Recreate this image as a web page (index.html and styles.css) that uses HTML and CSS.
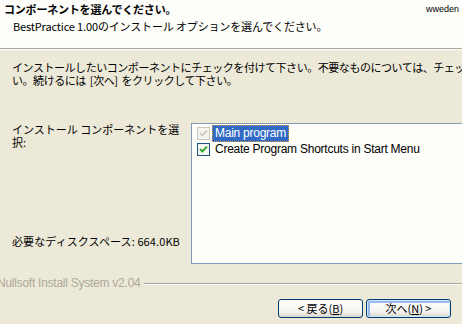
FILE: index.html
```html
<!DOCTYPE html>
<html lang="ja">
<head>
    <meta charset="UTF-8">
    <meta name="viewport" content="width=device-width, initial-scale=1.0">
    <title>BestPractice 1.00 セットアップ</title>
    <link rel="stylesheet" href="styles.css">
</head>
<body>

    <!-- Header -->
    <div class="header">
        <div class="header-top">
            <span class="title">コンポーネントを選んでください。</span>
            <span class="user">wweden</span>
        </div>
        <div class="subtitle">BestPractice 1.00のインストール オプションを選んでください。</div>
    </div>

    <!-- Page body -->
    <div class="page">
        <div class="intro">
            <div class="intro-line">インストールしたいコンポーネントにチェックを付けて下さい。不要なものについては、チェックを外して下さ</div>
            <div class="intro-line">い。続けるには [次へ] をクリックして下さい。</div>
        </div>

        <div class="components">
            <div class="side">
                <div class="side-label">インストール コンポーネントを選択:</div>
                <div class="side-space">必要なディスクスペース: 664.0KB</div>
            </div>
            <div class="tree">
                <div class="item">
                    <svg class="check disabled" width="13" height="13" viewBox="0 0 13 13">
                        <rect x="0.5" y="0.5" width="12" height="12" fill="#f4f3ee" stroke="#cac8bb"/>
                        <path d="M3 6 L5.2 8.4 L10 3.6" fill="none" stroke="#cac8bb" stroke-width="1.8"/>
                    </svg>
                    <span class="item-text selected">Main program</span>
                </div>
                <div class="item">
                    <svg class="check" width="13" height="13" viewBox="0 0 13 13">
                        <rect x="0.5" y="0.5" width="12" height="12" fill="#f6f6f1" stroke="#1c5180"/>
                        <path d="M3 6 L5.2 8.4 L10 3.6" fill="none" stroke="#21a121" stroke-width="1.8"/>
                    </svg>
                    <span class="item-text">Create Program Shortcuts in Start Menu</span>
                </div>
            </div>
        </div>
    </div>

    <!-- Footer -->
    <div class="footer">
        <div class="brand">
            <span class="brand-text">Nullsoft Install System v2.04</span>
            <span class="rule"></span>
        </div>
        <div class="buttons">
            <button class="btn">&lt; 戻る(<u>B</u>)</button>
            <button class="btn default">次へ(<u>N</u>) &gt;</button>
        </div>
    </div>

</body>
</html>
```

FILE: styles.css
```css
/* Base */
body{
    margin: 0;
    width: 462px;
    height: 324px;
    overflow: hidden;
    background-color: #ece9d8;
    font-family: "Noto Sans CJK JP", "Liberation Sans", sans-serif;
    font-size: 11px;
    line-height: 13px;
    color: #000;
}

/* Header */
.header{
    height: 48px;
    background-color: #fdfdf9;
    border-bottom: 1px solid #aca899;
    box-shadow: 0 1px 0 #fff;
}
.header-top{
    display: flex;
    justify-content: space-between;
    align-items: flex-start;
    padding: 3px 3px 0 4px;
}
.title{
    font-weight: bold;
    letter-spacing: -0.2px;
}
.user{
    font-family: "Liberation Sans", sans-serif;
    font-size: 9px;
    line-height: 10px;
    padding-top: 1px;
}
.subtitle{
    padding: 4px 0 0 13px;
    white-space: nowrap;
    letter-spacing: -0.15px;
}

/* Page */
.page{
    padding: 12px 0 0 12px;
}
.intro-line{
    white-space: nowrap;
    letter-spacing: -0.45px;
    word-spacing: 2px;
}
.components{
    display: flex;
    height: 141px;
    margin-top: 36px;
}
.side{
    width: 179px;
    display: flex;
    flex-direction: column;
    justify-content: space-between;
    padding-bottom: 16px;
}
.side-label{
    width: 172px;
}
.side-space{
    letter-spacing: 0.1px;
}
.tree{
    flex: 1;
    margin-right: -40px;
    border: 1px solid #7f9db9;
    background-color: #fdfdf9;
    padding: 1px 0 0 5px;
}
.item{
    display: flex;
    align-items: center;
    height: 16.5px;
}
.check{
    flex: none;
    margin-right: 2px;
}
.item-text{
    font-family: "Liberation Sans", sans-serif;
    font-size: 12px;
    letter-spacing: -0.25px;
    line-height: 15px;
    padding: 0 2px;
    border: 1px dotted transparent;
}
.selected{
    background-color: #316ac5;
    color: #fff;
    border-color: #e2a03a;
}

/* Footer */
.footer{
    margin-top: 13px;
}
.brand{
    display: flex;
    align-items: center;
    margin-left: -3px;
}
.brand-text{
    font-family: "Liberation Sans", sans-serif;
    font-size: 12px;
    letter-spacing: -0.25px;
    color: #aca899;
    white-space: nowrap;
}
.rule{
    flex: 1;
    margin-left: 4px;
    border-top: 1px solid #aca899;
    border-bottom: 1px solid #fff;
}
.buttons{
    display: flex;
    justify-content: flex-end;
    gap: 3px;
    padding: 9px 11px 0 0;
}
.btn{
    width: 85px;
    height: 19px;
    padding: 0;
    font-family: "Noto Sans CJK JP", sans-serif;
    font-size: 11px;
    line-height: 15px;
    color: #000;
    border: 1px solid #003c74;
    border-radius: 3px;
    background: linear-gradient(#ffffff, #f4f3ee 70%, #d8d4c8);
}
.default{
    box-shadow: inset 0 0 0 1px #cee7ff, inset 1px 1px 0 2px #98b8ea;
}
```
